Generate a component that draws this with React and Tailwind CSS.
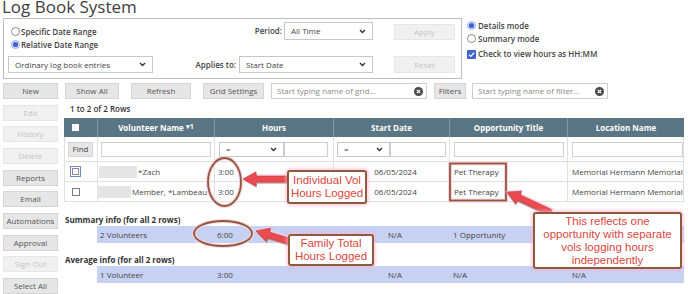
import React from "react";

const COLS = "grid grid-cols-[33px_117px_119px_116px_118px_117px]";
const SUMCOLS = "grid grid-cols-[117px_119px_116px_118px_117px]";

const Chevron = () => (
  <svg width="7" height="5" viewBox="0 0 7 5" className="shrink-0">
    <path d="M1 1l2.5 2.5L6 1" fill="none" stroke="#333" strokeWidth="1.4" />
  </svg>
);

const Radio = ({ checked }) => (
  <svg width="9" height="9" viewBox="0 0 9 9" className="shrink-0">
    <circle cx="4.5" cy="4.5" r="4" fill={checked ? "#dfe7fb" : "#fff"} stroke={checked ? "#86a0e6" : "#6f6f6f"} strokeWidth="0.8" />
    {checked && <circle cx="4.5" cy="4.5" r="2.6" fill="#3d63d6" />}
  </svg>
);

const Checked = () => (
  <svg width="9" height="9" viewBox="0 0 9 9" className="shrink-0">
    <rect x="0" y="0" width="9" height="9" rx="1" fill="#3e64d2" />
    <path d="M2 4.6l1.8 1.8L7 2.8" fill="none" stroke="#fff" strokeWidth="1.3" />
  </svg>
);

const ClearIcon = () => (
  <svg width="9" height="9" viewBox="0 0 9 9" className="shrink-0">
    <circle cx="4.5" cy="4.5" r="4.5" fill="#4a4a4a" />
    <path d="M2.8 2.8l3.4 3.4M6.2 2.8l-3.4 3.4" stroke="#fff" strokeWidth="1.2" />
  </svg>
);

const Btn = ({ children, disabled, className = "" }) => (
  <div
    className={`flex items-center justify-center border text-[8px] ${
      disabled ? "bg-[#f1f1f1] border-[#e6e6e6] text-[#c4c4c4]" : "bg-[#e6e6e6] border-[#d5d5d5] text-[#555]"
    } ${className}`}
  >
    {children}
  </div>
);

const Select = ({ value, className = "" }) => (
  <div className={`flex items-center justify-between border border-[#c8c8c8] bg-white px-[6px] text-[8px] text-[#444] ${className}`}>
    <span>{value}</span>
    <Chevron />
  </div>
);

const SearchInput = ({ placeholder, className = "" }) => (
  <div className={`flex items-center justify-between border border-[#cfcfcf] bg-white pl-[5px] pr-[3px] text-[8px] text-[#8a8a8a] ${className}`}>
    <span>{placeholder}</span>
    <ClearIcon />
  </div>
);

const Field = ({ className = "" }) => <div className={`h-[15px] border border-[#d0d0d0] bg-white ${className}`} />;

const Arrow = ({ x, y, deg, len }) => (
  <g transform={`translate(${x} ${y}) rotate(${deg})`}>
    <polygon points={`-2,0 13,-9 13,-5 ${len + 2},-5 ${len + 2},5 13,5 13,9`} fill="#fbd0e4" opacity="0.7" />
    <polygon points={`1,1.5 14,-5.5 14,-1.5 ${len + 1},-1.5 ${len + 1},4.5 14,4.5 14,8.5`} fill="#8a5846" opacity="0.55" />
    <polygon points={`0,0 13,-7 13,-3 ${len},-3 ${len},3 13,3 13,7`} fill="#ea4b50" stroke="#c43c3e" strokeWidth="0.6" />
  </g>
);

const Callout = ({ className = "", children }) => (
  <div
    className={`absolute flex items-center justify-center rounded-[3px] border-2 border-[#8d5a3b] bg-white text-center font-['Liberation_Sans',Arial,sans-serif] text-[11.5px] leading-[13px] text-[#d8463f] shadow-[0_0_3px_2px_rgba(250,175,210,0.55)] ${className}`}
  >
    <div>{children}</div>
  </div>
);

function FilterPanel() {
  return (
    <div className="flex h-[61px] w-[459px] border border-[#bdbdbd]">
      <div className="w-[149px] pl-[4px] pt-[6px]">
        <div className="flex h-[13px] items-center gap-[1px] pl-[3px] text-[8px] font-semibold">
          <Radio />
          Specific Date Range
        </div>
        <div className="flex h-[13px] items-center gap-[1px] pl-[3px] text-[8px] font-semibold">
          <Radio checked />
          Relative Date Range
        </div>
        <Select className="mt-[5px] h-[17px] w-[145px]" value="Ordinary log book entries" />
      </div>
      <div className="flex h-full w-[220px] flex-col justify-between pb-[5px] pt-[3px]">
        <div className="flex items-center justify-end gap-[2px]">
          <span className="text-[8px] font-semibold">Period:</span>
          <Select className="h-[18px] w-[89px]" value="All Time" />
        </div>
        <div className="flex items-center justify-end gap-[3px]">
          <span className="text-[8px] font-semibold">Applies to:</span>
          <Select className="h-[17px] w-[134px]" value="Start Date" />
        </div>
      </div>
      <div className="ml-[21px] flex w-[61px] flex-col justify-between pb-[5px] pt-[5px]">
        <Btn disabled className="h-[16px]">Apply</Btn>
        <Btn disabled className="h-[17px]">Reset</Btn>
      </div>
    </div>
  );
}

function ModeOptions() {
  return (
    <div className="ml-[5px] pt-[1px] text-[8px] font-semibold">
      <div className="flex h-[13px] items-center gap-[2px]">
        <Radio checked />
        Details mode
      </div>
      <div className="flex h-[13px] items-center gap-[2px]">
        <Radio />
        Summary mode
      </div>
      <div className="mt-[3px] flex h-[12px] items-center gap-[2px]">
        <Checked />
        Check to view hours as HH:MM
      </div>
    </div>
  );
}

const LEFT = [
  ["New"],
  ["Edit", true],
  ["History", true],
  ["Delete", true],
  ["Reports"],
  ["Email"],
  ["Automations"],
  ["Approval"],
  ["Sign Out", true],
  ["Select All"],
];

const ROWS = [
  { focus: true, blur: 38, pad: "ml-[1px]", name: "*Zach" },
  { focus: false, blur: 34, pad: "ml-[-1px]", name: "Member, *Lambeau" },
];

function Table() {
  const head = "flex items-center justify-center border-l border-[#8299a5]";
  const cell = "flex items-center border-l border-[#e0e0e0]";
  return (
    <div className="w-[620px]">
      <div className={`${COLS} h-[19px] bg-[#5a7583] text-[8px] font-bold text-white`}>
        <div className="flex items-center pl-[8px]">
          <span className="h-[7px] w-[7px] bg-white" />
        </div>
        <div className={head}>
          Volunteer Name <span className="ml-[2px] text-[7px]">▾1</span>
        </div>
        <div className={head}>Hours</div>
        <div className={head}>Start Date</div>
        <div className={head}>Opportunity Title</div>
        <div className={head}>Location Name</div>
      </div>
      <div className={`${COLS} h-[25px] border-b border-[#e0e0e0]`}>
        <div className="flex items-center border-l border-[#e0e0e0] pl-[3px]">
          <Btn className="h-[15px] w-[25px] !text-[#444]">Find</Btn>
        </div>
        <div className={`${cell} pl-[3px]`}>
          <Field className="w-[110px]" />
        </div>
        <div className={`${cell} pl-[4px]`}>
          <Select className="h-[15px] w-[65px]" value="=" />
          <Field className="w-[44px]" />
        </div>
        <div className={`${cell} pl-[3px]`}>
          <Select className="h-[15px] w-[53px]" value="=" />
          <Field className="w-[56px]" />
        </div>
        <div className={`${cell} pl-[4px]`}>
          <Field className="w-[110px]" />
        </div>
        <div className={`${cell} border-r pl-[4px]`}>
          <Field className="w-[111px]" />
        </div>
      </div>
      {ROWS.map((r, i) => (
        <div key={i} className={`${COLS} h-[20px] border-b border-[#e0e0e0] text-[8px] text-[#444]`}>
          <div className="flex items-center border-l border-[#e0e0e0] pl-[5px]">
            {r.focus ? (
              <div className="h-[11px] w-[11px] border border-[#7088cf] p-[1px]">
                <div className="h-full w-full border border-[#8a8a8a] bg-white" />
              </div>
            ) : (
              <div className="ml-[2px] h-[8px] w-[8px] border border-[#7a7a7a] bg-white" />
            )}
          </div>
          <div className={`${cell} gap-[1px] whitespace-nowrap`}>
            <span className={`h-[12px] rounded-[1px] bg-[#e5e5e5] blur-[0.5px] ${r.pad}`} style={{ width: r.blur }} />
            {r.name}
          </div>
          <div className={`${cell} pl-[3px]`}>3:00</div>
          <div className={`${cell} justify-center pl-[8px]`}>06/05/2024</div>
          <div className={`${cell} pl-[4px]`}>Pet Therapy</div>
          <div className={`${cell} border-r pl-[4px]`}>Memorial Hermann Memorial</div>
        </div>
      ))}
    </div>
  );
}

function Summary() {
  const c = "flex items-center";
  return (
    <div className="text-[8px]">
      <div className="flex h-[24px] items-end pb-[1px] pl-[1px] font-bold leading-[11px] text-[#333]">Summary info (for all 2 rows)</div>
      <div className={`${SUMCOLS} ml-[33px] h-[17px] bg-[#c7d2f3] text-[#444]`}>
        <div className={`${c} pl-[3px]`}>2 Volunteers</div>
        <div className={`${c} pl-[3px]`}>6:00</div>
        <div className={`${c} justify-center pl-[8px]`}>N/A</div>
        <div className={`${c} pl-[4px]`}>1 Opportunity</div>
        <div />
      </div>
      <div className="flex h-[23px] items-end pb-[1px] pl-[1px] font-bold leading-[11px] text-[#333]">Average info (for all 2 rows)</div>
      <div className={`${SUMCOLS} ml-[33px] h-[17px] bg-[#c7d2f3] text-[#444]`}>
        <div className={`${c} pl-[3px]`}>1 Volunteer</div>
        <div className={`${c} pl-[3px]`}>3:00</div>
        <div className={`${c} justify-center pl-[8px]`}>N/A</div>
        <div className={`${c} pl-[4px]`}>N/A</div>
        <div className={`${c} pl-[5px]`}>N/A</div>
      </div>
    </div>
  );
}

function Annotations() {
  return (
    <>
      <svg className="pointer-events-none absolute left-0 top-0" width="688" height="294" viewBox="0 0 688 294">
        <g fill="none">
          <ellipse cx="224.5" cy="182" rx="16.5" ry="24" stroke="#fbd0e4" strokeWidth="4" />
          <ellipse cx="224.5" cy="182" rx="16.5" ry="24" stroke="#8d5a3b" strokeWidth="1.8" />
          <ellipse cx="223" cy="233.5" rx="29" ry="12.5" stroke="#fbd0e4" strokeWidth="4" />
          <ellipse cx="223" cy="233.5" rx="29" ry="12.5" stroke="#8d5a3b" strokeWidth="1.8" />
          <rect x="450" y="163.5" width="56" height="37" stroke="#fbd0e4" strokeWidth="4" />
          <rect x="450" y="163.5" width="56" height="37" stroke="#8d5a3b" strokeWidth="1.8" />
        </g>
        <Arrow x={243} y={179} deg={0} len={45} />
        <Arrow x={256} y={231} deg={17} len={36} />
        <Arrow x={507} y={192} deg={25} len={48} />
      </svg>
      <Callout className="left-[287px] top-[170px] h-[34px] w-[80px]">
        Individual Vol
        <br />
        Hours Logged
      </Callout>
      <Callout className="left-[288px] top-[234px] h-[32px] w-[86px]">
        Family Total
        <br />
        Hours Logged
      </Callout>
      <Callout className="left-[533px] top-[212px] h-[57px] w-[149px]">
        This reflects one
        <br />
        opportunity with separate
        <br />
        vols logging hours
        <br />
        independently
      </Callout>
    </>
  );
}

export default function App() {
  return (
    <div className="relative h-[294px] w-[688px] overflow-hidden bg-white font-['Open_Sans',sans-serif] text-[#444]">
      <div className="h-[18px] pl-[2px]">
        <h1 className="text-[17px] leading-[14px] text-[#404040]">Log Book System</h1>
      </div>
      <div className="flex items-start pl-[3px]">
        <FilterPanel />
        <ModeOptions />
      </div>
      <div className="mt-[4px] flex pl-[3px]">
        <div className="flex w-[55px] flex-col gap-[5.67px]">
          {LEFT.map(([label, disabled]) => (
            <Btn key={label} disabled={disabled} className="h-[16px]">
              {label}
            </Btn>
          ))}
        </div>
        <div className="ml-[6px] w-[620px]">
          <div className="flex h-[16px] pl-[1px]">
            <Btn className="w-[54px]">Show All</Btn>
            <Btn className="ml-[12px] w-[60px]">Refresh</Btn>
            <Btn className="ml-[12px] w-[61px]">Grid Settings</Btn>
            <SearchInput className="ml-[7px] w-[156px]" placeholder="Start typing name of grid..." />
            <Btn className="ml-[7px] w-[32px]">Filters</Btn>
            <SearchInput className="ml-[6px] w-[136px]" placeholder="Start typing name of filter..." />
          </div>
          <div className="flex h-[19px] items-center pl-[6px] text-[8px] font-semibold text-[#333]">1 to 2 of 2 Rows</div>
          <Table />
          <Summary />
        </div>
      </div>
      <Annotations />
    </div>
  );
}
